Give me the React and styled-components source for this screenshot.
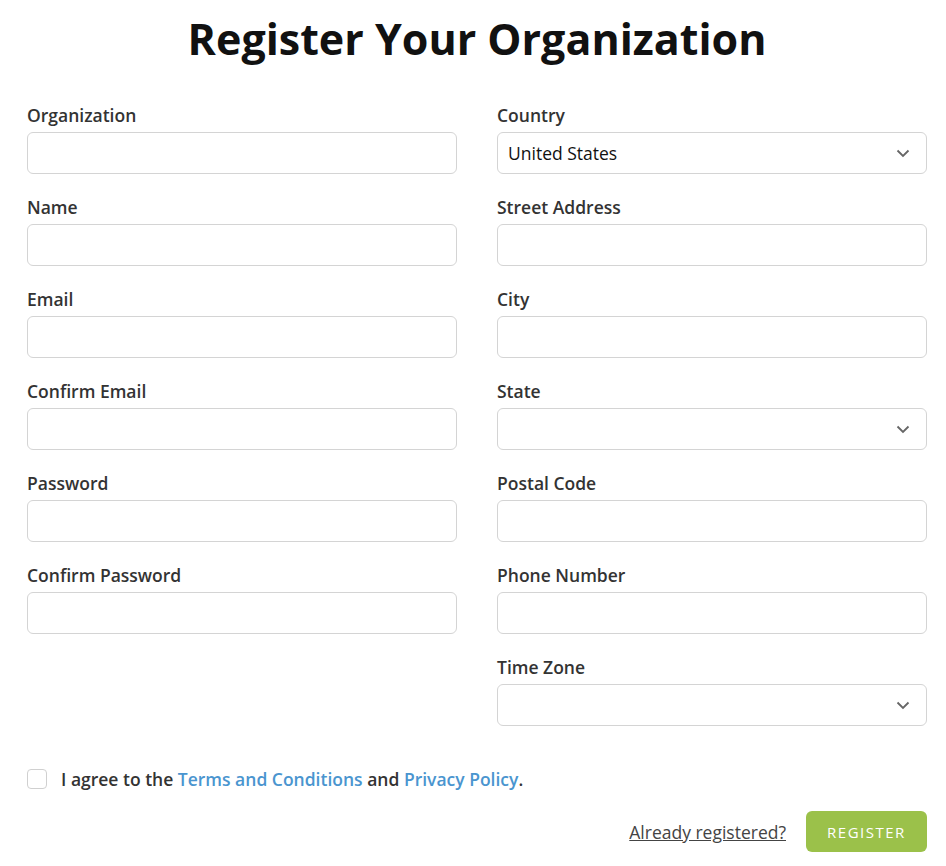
import React from "react";
import styled, { createGlobalStyle } from "styled-components";

const GlobalStyle = createGlobalStyle`
  body {
    margin: 0;
    background: #fff;
    font-family: "Open Sans", "Liberation Sans", sans-serif;
    color: #333;
  }
`;

const Page = styled.div`
  width: 900px;
  padding: 0 19px 0 27px;
`;

const Title = styled.h1`
  margin: 11px 0 0;
  text-align: center;
  font-size: 43px;
  line-height: 56px;
  font-weight: 700;
  color: #111;
`;

const Columns = styled.div`
  display: grid;
  grid-template-columns: 1fr 1fr;
  column-gap: 40px;
  margin-top: 36px;
  align-items: start;
`;

const Column = styled.div`
  display: flex;
  flex-direction: column;
  gap: 21px;
`;

const Field = styled.div`
  display: flex;
  flex-direction: column;
  gap: 5px;
`;

const Label = styled.label`
  font-size: 17.5px;
  line-height: 24px;
  font-weight: 600;
  color: #333;
`;

const Input = styled.input`
  box-sizing: border-box;
  height: 42px;
  width: 100%;
  border: 1px solid #d4d4d4;
  border-radius: 6px;
  padding: 0 10px;
  font-family: inherit;
  font-size: 17px;
  outline: none;
`;

const SelectBox = styled.div`
  box-sizing: border-box;
  height: 42px;
  border: 1px solid #d4d4d4;
  border-radius: 6px;
  padding: 0 16px 0 10px;
  display: flex;
  align-items: center;
  justify-content: space-between;
  font-size: 17.5px;
  color: #111;
`;

const Agree = styled.div`
  display: flex;
  align-items: center;
  gap: 14px;
  margin-top: 41px;
  font-size: 17.5px;
  font-weight: 600;
  color: #333;
`;

const Check = styled.span`
  box-sizing: border-box;
  width: 20px;
  height: 20px;
  border: 1px solid #d0d0d0;
  border-radius: 4px;
`;

const Link = styled.a`
  color: #4a95cf;
  text-decoration: none;
`;

const Actions = styled.div`
  display: flex;
  justify-content: flex-end;
  align-items: center;
  gap: 20px;
  margin-top: 20px;
`;

const Already = styled.a`
  font-size: 17.5px;
  color: #444;
  text-decoration: underline;
`;

const Button = styled.button`
  height: 41px;
  width: 121px;
  border: none;
  border-radius: 6px;
  background: #9bc14a;
  color: #fff;
  font-family: inherit;
  font-size: 15px;
  letter-spacing: 1.5px;
`;

const Chevron = () => (
  <svg width="14" height="9" viewBox="0 0 14 9" fill="none">
    <path d="M1.5 1.5 L7 7 L12.5 1.5" stroke="#666" strokeWidth="1.8" />
  </svg>
);

const TextField = ({ label }) => (
  <Field>
    <Label>{label}</Label>
    <Input type="text" />
  </Field>
);

const SelectField = ({ label, value }) => (
  <Field>
    <Label>{label}</Label>
    <SelectBox>
      <span>{value}</span>
      <Chevron />
    </SelectBox>
  </Field>
);

export default function App() {
  return (
    <Page>
      <GlobalStyle />
      <Title>Register Your Organization</Title>
      <Columns>
        <Column>
          <TextField label="Organization" />
          <TextField label="Name" />
          <TextField label="Email" />
          <TextField label="Confirm Email" />
          <TextField label="Password" />
          <TextField label="Confirm Password" />
        </Column>
        <Column>
          <SelectField label="Country" value="United States" />
          <TextField label="Street Address" />
          <TextField label="City" />
          <SelectField label="State" value="" />
          <TextField label="Postal Code" />
          <TextField label="Phone Number" />
          <SelectField label="Time Zone" value="" />
        </Column>
      </Columns>
      <Agree>
        <Check />
        <span>
          I agree to the <Link href="#">Terms and Conditions</Link> and{" "}
          <Link href="#">Privacy Policy</Link>.
        </span>
      </Agree>
      <Actions>
        <Already href="#">Already registered?</Already>
        <Button>REGISTER</Button>
      </Actions>
    </Page>
  );
}
